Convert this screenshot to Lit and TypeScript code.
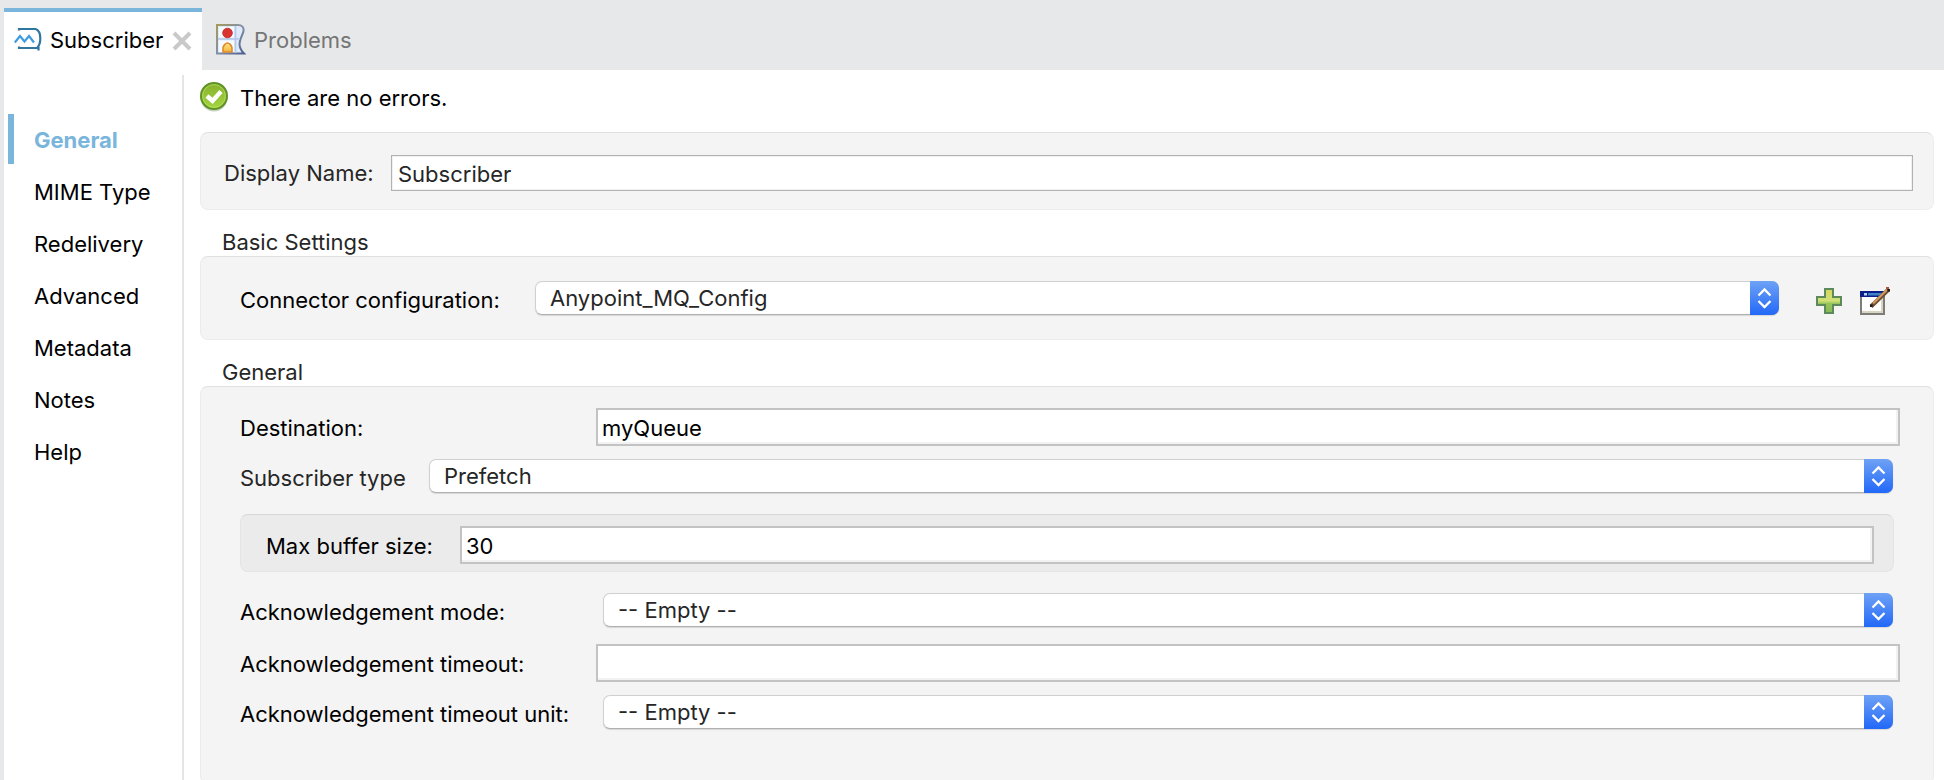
import { LitElement, html, css, svg } from "lit";
import { customElement, state } from "lit/decorators.js";
import { classMap } from "lit/directives/class-map.js";

const popup = (id: string, options: string[]) => html`
  <span class="popup">
    <select id=${id}>
      ${options.map((o) => html`<option>${o}</option>`)}
    </select>
    <svg class="arrows" viewBox="0 0 29 34" aria-hidden="true">
      <path
        d="M8.5 14.5 14.5 8.5 20.5 14.5M8.5 20 14.5 26 20.5 20"
        fill="none"
        stroke="#fff"
        stroke-width="2.3"
      />
    </svg>
  </span>
`;

const connectorIcon = svg`
  <svg width="28" height="24" viewBox="0 0 28 24" fill="none" aria-hidden="true">
    <path d="M5 3.500V2H21.500C24.500 3 26.300 7 26.300 11.500 26.300 15.500 25 19 23 21H5V19.500M24.500 20V23.500" stroke="#2f76a0" stroke-width="2.200"/>
    <path d="M.800 15.500 6 9 10.500 14.500 15 9 20 15.500" stroke="#3d9be0" stroke-width="2.200"/>
  </svg>`;

const closeIcon = svg`
  <svg width="20" height="20" viewBox="0 0 20 20" aria-hidden="true">
    <path d="M2 2 18 18M18 2 2 18" stroke="#c9c9c9" stroke-width="4"/>
  </svg>`;

const problemsIcon = svg`
  <svg width="30" height="31" viewBox="0 0 30 31" aria-hidden="true">
    <defs>
      <linearGradient id="edge" x1="0" y1="0" x2="1" y2="1">
        <stop offset="0" stop-color="#a59a5c"/><stop offset=".5" stop-color="#8390aa"/><stop offset="1" stop-color="#4c5f8f"/>
      </linearGradient>
      <linearGradient id="amber" x1="0" y1="0" x2="0" y2="1">
        <stop offset="0" stop-color="#ffe98a"/><stop offset="1" stop-color="#f4b23c"/>
      </linearGradient>
    </defs>
    <path d="M1 1H22C26 1 28 3.500 27.500 7 27 11 23.500 14 23.500 20 23.500 24 25.500 27 28 29.500H1Z" fill="#dfeafa" stroke="url(#edge)" stroke-width="2"/>
    <path d="M3 3H18V13.500H3ZM3 16.500H18V28H3Z" fill="#f7faff"/>
    <path d="M2 15H24M19.500 2V29" stroke="#b4c8e8" stroke-width="1.600"/>
    <circle cx="11.500" cy="9" r="4.800" fill="#d9322f" stroke="#c23a36"/>
    <path d="M7 28V24C7.500 21 10 19 11.500 19 13 19 15.500 21 16 24V28Z" fill="url(#amber)" stroke="#dc8a2c" stroke-width="1.600"/>
  </svg>`;

const okIcon = svg`
  <svg width="30" height="30" viewBox="0 0 30 30" aria-hidden="true">
    <defs>
      <linearGradient id="ok" x1="0" y1="0" x2="0" y2="1">
        <stop offset="0" stop-color="#86b12c"/><stop offset="1" stop-color="#a5d640"/>
      </linearGradient>
    </defs>
    <ellipse cx="14" cy="16" rx="13.500" ry="13.500" fill="#8a9a7a" opacity=".45"/>
    <circle cx="14" cy="14" r="13" fill="url(#ok)" stroke="#5d9423" stroke-width="2"/>
    <circle cx="14" cy="14" r="11.400" fill="none" stroke="#c5e27c" stroke-width="1" opacity=".6"/>
    <path d="M7 14 12.500 19 21 9.500" fill="none" stroke="#fff" stroke-width="4.400"/>
  </svg>`;

const plusIcon = svg`
  <svg width="26" height="26" viewBox="0 0 26 26" aria-hidden="true">
    <defs>
      <linearGradient id="plus" x1="0" y1="0" x2="0" y2="1">
        <stop offset="0" stop-color="#d9d45c"/><stop offset=".5" stop-color="#cfe07a"/><stop offset=".6" stop-color="#97c65a"/><stop offset="1" stop-color="#86b955"/>
      </linearGradient>
    </defs>
    <path d="M9 1H17V9H25V17H17V25H9V17H1V9H9Z" fill="url(#plus)" stroke="#5c8a5c" stroke-width="2"/>
  </svg>`;

const editIcon = svg`
  <svg width="31" height="28" viewBox="0 0 31 28" aria-hidden="true">
    <path d="M1 5H24V27H1Z" fill="#fff" stroke="#7c7c78" stroke-width="2"/>
    <path d="M2 25H22V11" fill="none" stroke="#d8d6c0" stroke-width="2"/>
    <path d="M0 4H24V10H0Z" fill="#0d1f86"/>
    <path d="M8 6H22V8.500H8Z" fill="#3f84c8"/>
    <path d="M4 6H7V8.500H4Z" fill="#b9d4ef"/>
    <path d="M11 19.500 28.500 2.500" stroke="#6b4d36" stroke-width="4.200"/>
    <path d="M13 16.500 27 2.800" stroke="#cf9a5c" stroke-width="2.200"/>
    <path d="M10 17.500H12.500V20H10ZM27.500 2H30V4.500H27.500Z" fill="#221a18"/>
    <path d="M26 0H29V2H26Z" fill="#a8563c"/>
  </svg>`;

@customElement("app-root")
class AppRoot extends LitElement {
  @state() private section = "General";

  private sections = ["General", "MIME Type", "Redelivery", "Advanced", "Metadata", "Notes", "Help"];

  static styles = css`
    :host {
      display: flex;
      flex-direction: column;
      height: 100vh;
      overflow: hidden;
      padding-left: 4px;
      background: #e7e8ea;
      font-family: Inter, "Liberation Sans", sans-serif;
      font-size: 22px;
      line-height: 26px;
      color: #000;
    }
    * {
      box-sizing: border-box;
    }
    input,
    select,
    button {
      font: inherit;
      color: inherit;
      margin: 0;
    }
    button {
      padding: 0;
      border: 0;
      background: none;
      display: flex;
      align-items: center;
    }
    .tabs {
      display: flex;
      flex: none;
      height: 70px;
      padding-top: 8px;
    }
    .tab {
      display: flex;
      align-items: center;
      padding: 0 10px;
    }
    .tab span {
      padding-top: 2px;
    }
    .tab.active {
      width: 198px;
      border-top: 4px solid #7ab5dc;
      background: #fff;
      padding-bottom: 4px;
    }
    .tab-name {
      gap: 8px;
    }
    .tab.active .tab-name {
      flex: 1;
    }
    .tab.active .close {
      padding-top: 4px;
    }
    .tab.idle {
      color: #757575;
      padding-left: 14px;
      text-shadow: 0 1px 0 #fff;
    }
    .body {
      display: flex;
      flex: 1;
      min-height: 0;
      background: #fff;
    }
    .sections {
      display: flex;
      flex-direction: column;
      flex: none;
      gap: 2px;
      width: 180px;
      margin-top: 5px;
      padding: 39px 0 0 4px;
      border-right: 2px solid #e4e5e7;
    }
    .section {
      height: 50px;
      padding: 1px 0 0 20px;
      border-left: 6px solid transparent;
    }
    .section.current {
      border-left-color: #7ab5dc;
      color: #7ab5dc;
      font-weight: 700;
    }
    .content {
      display: flex;
      flex-direction: column;
      flex: 1;
      min-width: 0;
      padding: 11px 10px 0 16px;
    }
    .status {
      display: flex;
      align-items: center;
      gap: 10px;
      height: 32px;
      margin-bottom: 19px;
    }
    .status span {
      padding-top: 2px;
    }
    .panel {
      border: 1px solid #ececec;
      border-top-color: #e0e0e0;
      border-radius: 8px;
      background: #f4f4f4;
    }
    .name-panel {
      height: 78px;
      padding: 4px 20px 0 23px;
    }
    .group-title {
      margin: 0;
      height: 46px;
      padding: 19px 0 0 22px;
      font-size: inherit;
      font-weight: 400;
      color: #262626;
    }
    .config-panel {
      height: 84px;
      padding: 0 42px 0 39px;
    }
    .general-panel {
      display: flex;
      flex-direction: column;
      flex: 1;
      gap: 11px;
      margin-bottom: -4px;
      padding: 21px 33px 0 39px;
    }
    .row {
      display: flex;
      align-items: center;
    }
    .soft {
      color: #262626;
    }
    .row label {
      flex: none;
      padding-top: 4px;
    }
    .row .popup,
    .row input {
      flex: 1;
      min-width: 0;
    }
    .name-panel label {
      width: 167px;
      padding-top: 0;
    }
    .config-panel label {
      width: 288px;
    }
    .general-panel > .row {
      height: 38px;
    }
    .general-panel label {
      width: 356px;
    }
    .general-panel .input-row label {
      padding-top: 2px;
    }
    .general-panel .type-row label {
      width: 182px;
    }
    .general-panel > .ack-row {
      margin-bottom: 4px;
    }
    .general-panel > .buffer-row {
      height: 58px;
      margin: 8px 6px 8px 0;
      padding: 4px 19px 0 25px;
      border-color: #e4e4e4;
      border-top-color: #d8d8d8;
      background: #ebebeb;
    }
    .general-panel .buffer-row label {
      width: 194px;
    }
    input {
      height: 38px;
      padding: 2px 4px 0;
      border: 2px solid #c3c3c3;
      border-radius: 0;
      background: #fff;
      outline: 0;
      box-shadow: inset -2px -2px #f2f2f2;
    }
    .name-panel input {
      height: 36px;
      padding: 2px 6px 0;
      border: 1px solid #b2b2b2;
      box-shadow: inset 0 0 0 1px #f0f0f0;
    }
    .popup {
      position: relative;
      margin: 0 7px;
    }
    .popup select {
      appearance: none;
      display: block;
      width: 100%;
      height: 34px;
      padding: 0 44px 0 14px;
      border: 1px solid #d0d0d0;
      border-bottom-color: #b0b0b0;
      border-radius: 7px;
      background: #fff;
      color: #262626;
      box-shadow: 0 1px 1px rgba(0, 0, 0, 0.12);
    }
    .arrows {
      position: absolute;
      right: 0;
      top: 0;
      width: 29px;
      height: 34px;
      border-radius: 0 7px 7px 0;
      background: linear-gradient(#6fa2f5, #2268f8);
      pointer-events: none;
    }
    .actions {
      display: flex;
      align-items: center;
      gap: 18px;
      padding: 5px 0 0 30px;
    }
  `;

  render() {
    return html`
      <div class="tabs">
        <div class="tab active">
          <button class="tab-name">${connectorIcon}<span>Subscriber</span></button>
          <button class="close" aria-label="Close">${closeIcon}</button>
        </div>
        <div class="tab idle">
          <button class="tab-name">${problemsIcon}<span>Problems</span></button>
        </div>
      </div>
      <div class="body">
        <nav class="sections">
          ${this.sections.map(
            (name) => html`
              <button
                class=${classMap({ section: true, current: name === this.section })}
                @click=${() => (this.section = name)}
              >
                ${name}
              </button>
            `
          )}
        </nav>
        <main class="content">
          <div class="status">${okIcon}<span>There are no errors.</span></div>
          <div class="panel name-panel row soft">
            <label for="name">Display Name:</label>
            <input id="name" .value=${"Subscriber"} />
          </div>
          <h2 class="group-title">Basic Settings</h2>
          <div class="panel config-panel row">
            <label for="config">Connector configuration:</label>
            ${popup("config", ["Anypoint_MQ_Config"])}
            <div class="actions">
              <button aria-label="Add">${plusIcon}</button>
              <button aria-label="Edit">${editIcon}</button>
            </div>
          </div>
          <h2 class="group-title">General</h2>
          <div class="panel general-panel">
            <div class="row input-row">
              <label for="destination">Destination:</label>
              <input id="destination" .value=${"myQueue"} />
            </div>
            <div class="row type-row soft">
              <label for="type">Subscriber type</label>
              ${popup("type", ["Prefetch"])}
            </div>
            <div class="panel row input-row buffer-row">
              <label for="buffer">Max buffer size:</label>
              <input id="buffer" .value=${"30"} />
            </div>
            <div class="row ack-row">
              <label for="mode">Acknowledgement mode:</label>
              ${popup("mode", ["-- Empty --"])}
            </div>
            <div class="row input-row">
              <label for="timeout">Acknowledgement timeout:</label>
              <input id="timeout" />
            </div>
            <div class="row">
              <label for="unit">Acknowledgement timeout unit:</label>
              ${popup("unit", ["-- Empty --"])}
            </div>
          </div>
        </main>
      </div>
    `;
  }
}
